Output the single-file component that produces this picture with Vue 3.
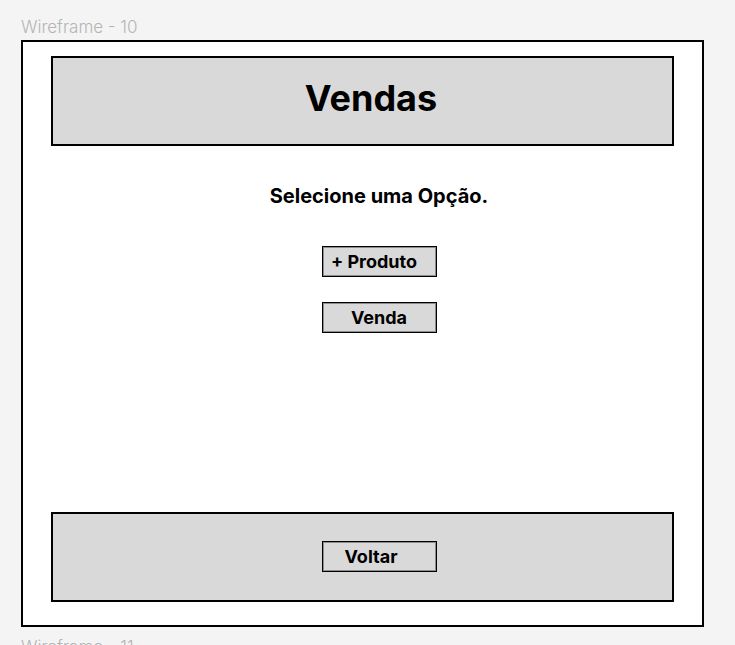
<script setup>
const options = [
  { label: '+ Produto', name: 'product' },
  { label: 'Venda', name: 'sale' },
]
</script>

<template>
  <div class="canvas">
    <p class="frame-label">Wireframe - 10</p>
    <main class="frame">
      <header class="panel header">
        <h1>Vendas</h1>
      </header>
      <section class="content">
        <h2>Selecione uma Opção.</h2>
        <button v-for="o in options" :key="o.name" type="button" class="btn" :class="o.name">{{ o.label }}</button>
      </section>
      <footer class="panel footer">
        <button type="button" class="btn back">Voltar</button>
      </footer>
    </main>
    <p class="frame-label next">Wireframe - 11</p>
  </div>
</template>

<style>
body {
  background: #f4f4f4;
}
</style>

<style scoped>
.canvas {
  box-sizing: border-box;
  height: 100vh;
  overflow: hidden;
  display: flex;
  flex-direction: column;
  padding: 15px 31px 0 21px;
  font-family: Inter, "Liberation Sans", sans-serif;
  color: #000;
}
.frame-label {
  flex: none;
  margin: 0 0 1px;
  height: 24px;
  font-size: 17px;
  line-height: 24px;
  font-weight: 350;
  color: #b4b4b4;
}
.next {
  height: 10px;
  margin: 8px 0 0;
}
.frame {
  flex: 1;
  display: flex;
  flex-direction: column;
  padding: 14px 28px 23px;
  border: 2px solid #000;
  background: #fff;
}
.panel {
  box-sizing: border-box;
  display: flex;
  align-items: center;
  justify-content: center;
  height: 90px;
  border: 2px solid #000;
  background: #d9d9d9;
}
.header {
  padding: 0 0 6px 17px;
}
.footer,
.content {
  padding-left: 33px;
}
.footer {
  padding-bottom: 1px;
}
h1 {
  margin: 0;
  font-size: 36px;
  line-height: 44px;
  font-weight: 700;
}
.content {
  flex: 1;
  display: flex;
  flex-direction: column;
  align-items: center;
  padding-top: 38px;
}
h2 {
  margin: 0 0 38px;
  font-size: 20px;
  line-height: 24px;
  font-weight: 650;
}
.btn {
  box-sizing: border-box;
  width: 115px;
  height: 31px;
  margin: 0;
  padding: 0;
  border: 1px solid #000;
  border-radius: 0;
  box-shadow: inset 0 0 0 1px rgba(0, 0, 0, 0.35);
  background: #d9d9d9;
  color: #000;
  font-family: inherit;
  font-size: 18px;
  line-height: 24px;
  font-weight: 700;
}
.product {
  padding-right: 10px;
}
.sale {
  margin-top: 25px;
}
.back {
  padding-right: 16px;
}
</style>
